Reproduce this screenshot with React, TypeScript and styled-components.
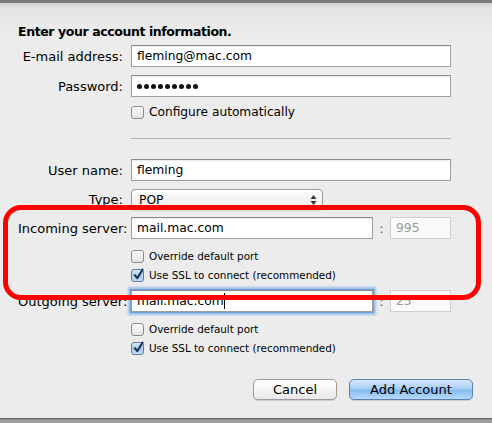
import styled, { createGlobalStyle } from 'styled-components';

const GlobalStyle = createGlobalStyle`
  html, body {
    margin: 0;
    padding: 0;
    background: #9c9c9c;
  }
  body {
    font-family: "DejaVu Sans", "Liberation Sans", sans-serif;
    color: #000;
  }
`;

const Window = styled.div`
  width: 492px;
  height: 423px;
  display: flex;
  flex-direction: column;
  overflow: hidden;
  background: #9c9c9c;
`;

const TopEdge = styled.div`
  height: 3px;
  background: #7b7b7b;
  flex: none;
`;

const Sheet = styled.div`
  position: relative;
  height: 415px;
  flex: none;
  background: linear-gradient(#cdcdcd 0px, #e4e4e4 5px, #e9e9e9 20px, #ececec 40px, #ececec 100%);
  padding: 21px 0 0 18px;
  box-sizing: border-box;
  box-shadow: 0 1px 1px rgba(0, 0, 0, 0.35);
`;

const Heading = styled.h1`
  margin: 0 0 5px;
  font-size: 12.5px;
  letter-spacing: -0.4px;
  font-weight: bold;
  line-height: 16px;
`;

const Row = styled.div<{ $top?: number }>`
  display: flex;
  align-items: center;
  margin-top: ${({ $top }) => $top ?? 0}px;
`;

const Label = styled.label`
  width: 105px;
  text-align: right;
  font-size: 13px;
  padding-right: 8px;
  flex: none;
  white-space: nowrap;
`;

const TextField = styled.div<{ $width: number; $focused?: boolean }>`
  width: ${({ $width }) => $width}px;
  height: 22px;
  box-sizing: border-box;
  background: #fff;
  border: 1px solid #9d9d9d;
  border-top-color: #8a8a8a;
  padding-left: 5px;
  font-size: 12.3px;
  line-height: 20px;
  white-space: nowrap;
  overflow: hidden;
  display: flex;
  align-items: center;
  box-shadow: ${({ $focused }) =>
    $focused ? '0 0 0 1px #6d9fd6, 0 0 2px 3px #9dc1ea' : 'inset 0 1px 1px rgba(0,0,0,0.08)'};
  flex: none;
`;

const Dot = styled.span`
  width: 5px;
  height: 5px;
  border-radius: 50%;
  background: #111;
  margin-right: 2px;
  flex: none;
`;

const Caret = styled.span`
  display: inline-block;
  width: 1px;
  height: 16px;
  background: #000;
`;

const Colon = styled.span`
  width: 17px;
  text-align: center;
  font-size: 13px;
  color: #555;
  flex: none;
`;

const PortField = styled.div`
  width: 61px;
  height: 22px;
  box-sizing: border-box;
  background: #fafafa;
  border: 1px solid #cfcfcf;
  padding-left: 5px;
  font-size: 12.3px;
  line-height: 20px;
  color: #9a9a9a;
  flex: none;
`;

const Indent = styled.div`
  width: 113px;
  flex: none;
`;

const CheckRow = styled.label`
  display: flex;
  align-items: center;
  gap: 5px;
  font-size: 10.4px;
  line-height: 13px;
`;

const CheckRowLarge = styled(CheckRow)`
  font-size: 12.2px;
  line-height: 16px;
`;

const Box = styled.span<{ $checked?: boolean }>`
  width: 13px;
  height: 13px;
  box-sizing: border-box;
  border: 1px solid ${({ $checked }) => ($checked ? '#5f7fa8' : '#8c8c8c')};
  border-radius: 3px;
  background: ${({ $checked }) =>
    $checked
      ? 'linear-gradient(#dbe9f8, #a9c9ee 50%, #c4dcf6)'
      : 'linear-gradient(#ffffff, #f0f0f0 50%, #e4e4e4)'};
  position: relative;
  flex: none;
`;

const Separator = styled.div`
  width: 320px;
  height: 1px;
  background: #b5b5b5;
  margin: 18px 0 0 113px;
`;

const Popup = styled.div`
  width: 192px;
  height: 21px;
  box-sizing: border-box;
  border: 1px solid #9a9a9a;
  border-radius: 4px;
  background: linear-gradient(#ffffff, #f4f4f4 50%, #e9e9e9);
  box-shadow: 0 1px 1px rgba(0, 0, 0, 0.12);
  display: flex;
  align-items: center;
  justify-content: space-between;
  padding: 0 5px 0 7px;
  font-size: 12.3px;
`;

const Buttons = styled.div`
  display: flex;
  justify-content: flex-end;
  gap: 12px;
  margin: 24px 19px 0 0;
`;

const Button = styled.button<{ $primary?: boolean }>`
  height: 21px;
  box-sizing: border-box;
  border-radius: 5px;
  border: 1px solid ${({ $primary }) => ($primary ? '#5b7eb4' : '#9a9a9a')};
  background: ${({ $primary }) =>
    $primary
      ? 'linear-gradient(#d6e9fc, #a6cdf5 45%, #86bbf0 55%, #b8dbfb)'
      : 'linear-gradient(#ffffff, #f5f5f5 50%, #e8e8e8)'};
  box-shadow: 0 1px 1px rgba(0, 0, 0, 0.15);
  font-family: inherit;
  font-size: 13px;
  padding: 0;
  width: ${({ $primary }) => ($primary ? 124 : 84)}px;
  color: #000;
`;

const Annotation = styled.div`
  position: absolute;
  left: 3px;
  top: 202px;
  width: 478px;
  height: 95px;
  box-sizing: border-box;
  border: 5px solid #ff0000;
  border-radius: 18px;
  pointer-events: none;
`;

const Check = ({ checked }: { checked?: boolean }) => (
  <Box $checked={checked}>
    {checked && (
      <svg width="13" height="13" viewBox="0 0 13 13" style={{ position: 'absolute', left: 0, top: -2 }}>
        <path d="M2.8 7.2 L5.3 10.2 L10.6 1.6" fill="none" stroke="#1c2c4c" strokeWidth="2" strokeLinecap="round" strokeLinejoin="round" />
      </svg>
    )}
  </Box>
);

const Arrows = () => (
  <svg width="7" height="12" viewBox="0 0 7 12">
    <path d="M3.5 1 L6.5 5 L0.5 5 Z" fill="#333" />
    <path d="M3.5 11 L6.5 7 L0.5 7 Z" fill="#333" />
  </svg>
);

const ServerBlock = ({ label, server, port, focused, top }: { label: string; server: string; port: string; focused?: boolean; top: number }) => (
  <>
    <Row $top={top}>
      <Label>{label}</Label>
      <TextField $width={242} $focused={focused}>
        {server}
        {focused && <Caret />}
      </TextField>
      <Colon>:</Colon>
      <PortField>{port}</PortField>
    </Row>
    <Row $top={11}>
      <Indent />
      <CheckRow>
        <Check />
        Override default port
      </CheckRow>
    </Row>
    <Row $top={6}>
      <Indent />
      <CheckRow>
        <Check checked />
        Use SSL to connect (recommended)
      </CheckRow>
    </Row>
  </>
);

export default function App() {
  return (
    <>
      <GlobalStyle />
      <Window>
        <TopEdge />
        <Sheet>
          <Heading>Enter your account information.</Heading>
          <Row>
            <Label>E-mail address:</Label>
            <TextField $width={320}>fleming@mac.com</TextField>
          </Row>
          <Row $top={8}>
            <Label>Password:</Label>
            <TextField $width={320}>
              {Array.from({ length: 9 }, (_, i) => (
                <Dot key={i} />
              ))}
            </TextField>
          </Row>
          <Row $top={7}>
            <Indent />
            <CheckRowLarge>
              <Check />
              Configure automatically
            </CheckRowLarge>
          </Row>
          <Separator />
          <Row $top={20}>
            <Label>User name:</Label>
            <TextField $width={320}>fleming</TextField>
          </Row>
          <Row $top={8}>
            <Label>Type:</Label>
            <Popup>
              POP
              <Arrows />
            </Popup>
          </Row>
          <ServerBlock label="Incoming server:" server="mail.mac.com" port="995" top={7} />
          <ServerBlock label="Outgoing server:" server="mail.mac.com" port="25" top={8} focused />
          <Buttons>
            <Button>Cancel</Button>
            <Button $primary>Add Account</Button>
          </Buttons>
          <Annotation />
        </Sheet>
      </Window>
    </>
  );
}
